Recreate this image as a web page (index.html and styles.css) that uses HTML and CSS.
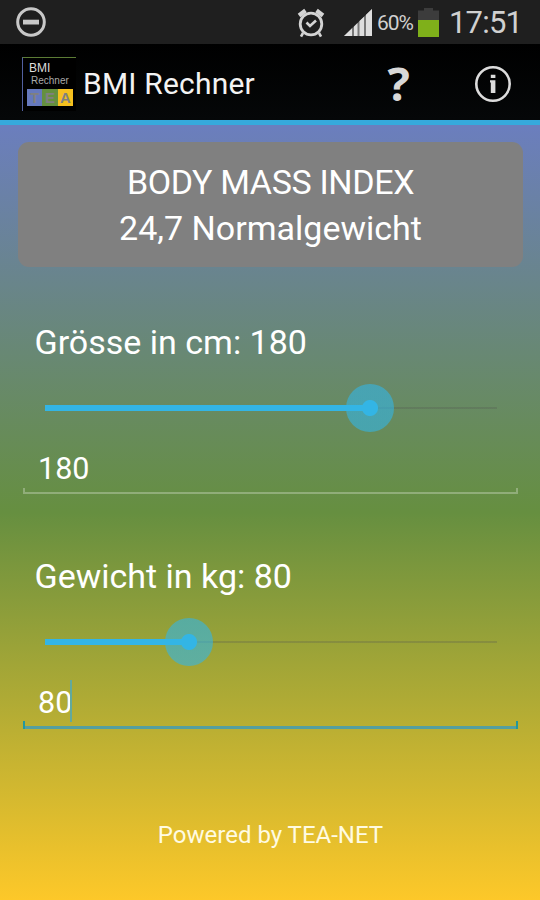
FILE: index.html
```html
<!DOCTYPE html>
<html lang="de">
<head>
    <meta charset="UTF-8">
    <meta name="viewport" content="width=device-width, initial-scale=1.0">
    <title>BMI Rechner</title>
    <link rel="stylesheet" href="styles.css">
</head>
<body>
    <div class="statusbar">
        <svg class="icon-dnd" width="32" height="32" viewBox="0 0 32 32">
            <circle cx="16" cy="16" r="13.3" fill="none" stroke="#c8c8c8" stroke-width="3"/>
            <rect x="8" y="13.7" width="16" height="4.8" fill="#c8c8c8"/>
        </svg>
        <div class="status-right">
            <svg class="icon-alarm" width="28" height="30" viewBox="0 0 28 30">
                <g fill="none" stroke="#d4d4d4">
                    <circle cx="14" cy="16" r="10.8" stroke-width="2.8"/>
                    <path d="M9.5 14.5l3.5 3.5 6-5.5" stroke-width="2.6"/>
                    <path d="M2 7.5l6.5-5M26 7.5l-6.5-5" stroke-width="4.2"/>
                    <path d="M6 25l-2 3.6M22 25l2 3.6" stroke-width="2.6"/>
                </g>
            </svg>
            <svg class="icon-signal" width="28" height="27" viewBox="0 0 28 27">
                <path d="M0 27L28 0V27Z" fill="#777"/>
                <path d="M0 27L8 19.3V27ZM10 17.4L13.5 14V27H10ZM15.5 12L20 7.7V27H15.5ZM22 5.8L28 0V27H22Z" fill="#dedede"/>
            </svg>
            <span class="percent">60%</span>
            <svg class="icon-battery" width="21" height="29" viewBox="0 0 21 29">
                <path d="M0 2.5H6V0H15V2.5H21V13H0Z" fill="#3c3c3c"/>
                <rect y="12" width="21" height="17" fill="#7fb01a"/>
            </svg>
            <span class="clock">17:51</span>
        </div>
    </div>

    <div class="actionbar">
        <div class="logo">
            <span class="logo-bmi">BMI</span>
            <span class="logo-rechner">Rechner</span>
            <div class="logo-tea"><span>T</span><span>E</span><span>A</span></div>
        </div>
        <h1>BMI Rechner</h1>
        <div class="help">?</div>
        <svg class="icon-info" width="38" height="38" viewBox="0 0 38 38">
            <circle cx="19" cy="19" r="16.7" fill="none" stroke="#dcdcdc" stroke-width="2.6"/>
            <path d="M16.8 9.7H21.4V13H16.8ZM16 15.3H21.4V28H16.8V17.5H16Z" fill="#dcdcdc"/>
        </svg>
    </div>

    <main>
        <div class="result">
            <div class="result-title">BODY MASS INDEX</div>
            <div class="result-value">24,7 Normalgewicht</div>
        </div>

        <section class="group">
            <div class="label">Grösse in cm: 180</div>
            <div class="slider">
                <div class="slider-fill" style="width: 324.5px"></div>
                <div class="slider-thumb" style="left: 324.5px"></div>
            </div>
            <div class="field"><span>180</span></div>
        </section>

        <section class="group">
            <div class="label">Gewicht in kg: 80</div>
            <div class="slider">
                <div class="slider-fill" style="width: 143.5px"></div>
                <div class="slider-thumb" style="left: 143.5px"></div>
            </div>
            <div class="field active"><span>80</span><i class="caret"></i></div>
        </section>

        <footer>Powered by TEA-NET</footer>
    </main>
</body>
</html>
```

FILE: styles.css
```css
* {
    margin: 0;
    padding: 0;
    box-sizing: border-box;
}

body {
    width: 540px;
    height: 900px;
    display: flex;
    flex-direction: column;
    font-family: Roboto, sans-serif;
    color: #fff;
    background: #000;
    overflow: hidden;
    white-space: nowrap;
}

svg {
    flex: none;
    display: block;
}

/* status bar */
.statusbar {
    height: 44px;
    padding: 0 18px 0 15px;
    display: flex;
    align-items: center;
    justify-content: space-between;
    background: #1f1f1f;
}

.status-right {
    display: flex;
    align-items: center;
    color: #d0d0d0;
}

.icon-alarm {
    margin: 1px -1px 0 1px;
}

.icon-signal {
    margin-left: 20px;
}

.percent {
    width: 37px;
    margin: 2px 0 0 5px;
    font-size: 21px;
    letter-spacing: -1.1px;
}

.icon-battery {
    margin-left: 4px;
}

.clock {
    width: 73px;
    margin-left: 10px;
    font-size: 31px;
    letter-spacing: -0.8px;
}

/* action bar */
.actionbar {
    height: 81px;
    padding: 0 28px 0 22px;
    display: flex;
    align-items: center;
    background: linear-gradient(#000, #050708);
    border-bottom: 5px solid #36a9dc;
}

.logo {
    width: 54px;
    height: 54px;
    margin-top: 3px;
    padding: 4px 3px 0 4px;
    display: flex;
    flex-direction: column;
    border-top: 1px solid #5c7c35;
    border-left: 1.5px solid #5260a0;
    background: #000;
    color: #ddd;
}

.logo-bmi {
    padding-left: 2px;
    font: 12px/13px "Liberation Sans", sans-serif;
}

.logo-rechner {
    padding-left: 4px;
    font: 10px/12px "Liberation Sans", sans-serif;
    color: #aaa;
}

.logo-tea {
    height: 17px;
    margin-top: 2px;
    display: grid;
    grid-template-columns: 1fr 1fr 1fr;
    font: bold 15px/17px "Liberation Sans", sans-serif;
    text-align: center;
    color: #808080;
}

.logo-tea span:nth-child(1) {
    background: #6679bd;
}

.logo-tea span:nth-child(2) {
    background: #65903f;
}

.logo-tea span:nth-child(3) {
    background: #f5c01f;
}

h1 {
    margin: 3px 0 0 7px;
    font-size: 30px;
    font-weight: 400;
    letter-spacing: 0.2px;
    color: #f3f3f3;
}

.help {
    margin: 2px 0 0 auto;
    font: bold 47px/76px "Open Sans", sans-serif;
    color: #d8d8d8;
}

.icon-info {
    margin: 3px 0 0 64px;
}

/* content */
main {
    flex: 1;
    padding: 17px 17px 0 18px;
    background: linear-gradient(#6b7ebe, #668f40 50%, #fdc829);
}

.result {
    height: 125px;
    margin-bottom: 55px;
    padding-top: 17px;
    border-radius: 11px;
    background: #808080;
    font-size: 34px;
    line-height: 46px;
    text-align: center;
}

.result-title {
    letter-spacing: -0.35px;
}

.group {
    height: 172px;
    margin: 0 5px 62px;
    display: flex;
    flex-direction: column;
}

.label {
    padding-left: 11.5px;
    font-size: 34px;
    line-height: 40px;
}

.slider {
    position: relative;
    flex: none;
    height: 48px;
    margin: 21.5px 21px 10.5px 22px;
    display: flex;
    align-items: center;
    background: linear-gradient(rgba(80, 80, 80, 0.25), rgba(80, 80, 80, 0.25)) center / 100% 2px no-repeat;
}

.slider-fill {
    height: 6px;
    background: #33b5e5;
}

.slider-thumb {
    position: absolute;
    top: 0;
    width: 48px;
    height: 48px;
    margin-left: -24px;
    border-radius: 50%;
    background: radial-gradient(circle, #33b5e5 7.5px, rgba(51, 181, 229, 0.6) 8.5px);
}

.field {
    height: 52px;
    padding: 1px 0 0 15px;
    display: flex;
    align-items: center;
    font-size: 30.5px;
    background:
        linear-gradient(rgba(255, 255, 255, 0.28), rgba(255, 255, 255, 0.28)) bottom / 100% 2px no-repeat,
        linear-gradient(rgba(255, 255, 255, 0.28), rgba(255, 255, 255, 0.28)) 0 46px / 2px 4px no-repeat,
        linear-gradient(rgba(255, 255, 255, 0.28), rgba(255, 255, 255, 0.28)) 100% 46px / 2px 4px no-repeat;
}

.field.active {
    height: 54px;
    padding-bottom: 2px;
    flex: none;
    background:
        linear-gradient(#24979c, #24979c) 0 45px / 2px 8px no-repeat,
        linear-gradient(#24979c, #24979c) 100% 45px / 2px 8px no-repeat,
        linear-gradient(#559fa0, #559fa0) 0 50px / 100% 3px no-repeat;
}

.caret {
    width: 2px;
    height: 42px;
    margin: -3px 0 0 -2px;
    background: #62a99d;
}

footer {
    margin-top: 90px;
    font-size: 24px;
    line-height: 34px;
    text-align: center;
    color: #fffbe2;
}
```
